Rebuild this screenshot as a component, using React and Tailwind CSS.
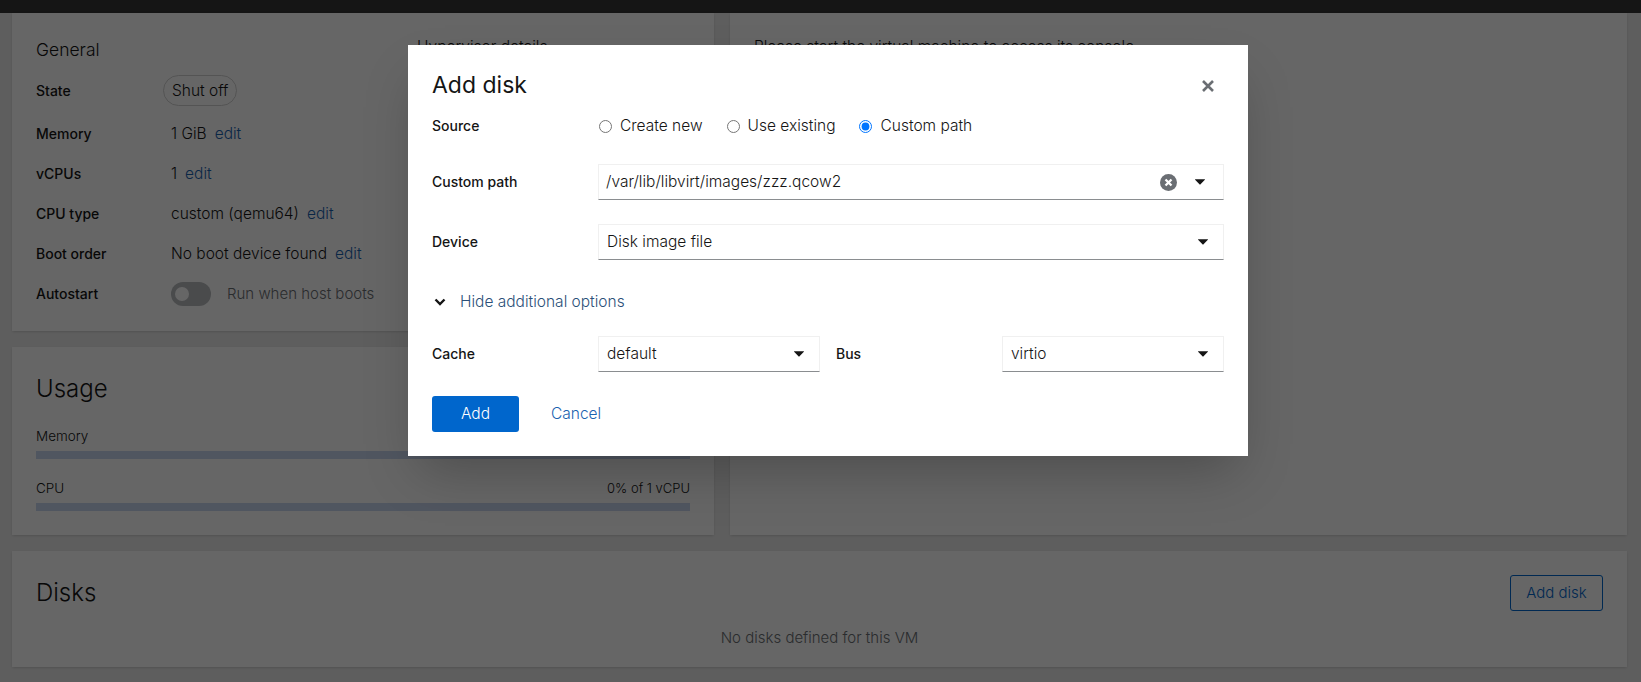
import React from "react";

function Caret() {
    return (
        <svg width="10" height="6" viewBox="0 0 10 6" className="shrink-0">
            <path d="M0.3 0.2h9.4c.3 0 .4.3.2.5L5.3 5.6c-.2.2-.4.2-.6 0L.1.7C-.1.5 0 .2.3.2z" fill="#151515" />
        </svg>
    );
}

function Select({ value }) {
    return (
        <div className="flex h-9 items-center justify-between border border-[#f0f0f0] border-b-[#8a8d90] pl-2 pr-[15px] text-[#151515]">
            <span>{value}</span>
            <Caret />
        </div>
    );
}

function Radio({ label, checked }) {
    return (
        <label className="flex items-center gap-2 text-[#151515]">
            <input type="radio" name="source" defaultChecked={checked} className="m-0 h-[13px] w-[13px]" />
            <span>{label}</span>
        </label>
    );
}

function InfoRow({ label, children }) {
    return (
        <>
            <span className="text-sm font-medium text-[#151515]">{label}</span>
            <div className="flex items-center gap-2 text-[#151515]">{children}</div>
        </>
    );
}

function Edit() {
    return <a className="text-[#1a62b0]">edit</a>;
}

function UsageBar({ label, right }) {
    return (
        <div>
            <div className="flex h-5 items-center justify-between text-[13.5px] text-[#151515]">
                <span>{label}</span>
                <span className="text-[13px]">{right}</span>
            </div>
            <div className="mt-[5px] h-2 bg-[#c9d8f0]" />
        </div>
    );
}

export default function App() {
    return (
        <div className="relative h-[682px] overflow-hidden bg-[#ececec] font-['Inter',sans-serif] text-[15.5px] font-[350] leading-6">
            <div className="h-[13px] bg-[#353535]" />

            <div className="grid grid-cols-[702px_897px] gap-4 px-3">
                <div className="grid h-[318px] grid-cols-[381px_1fr] bg-white px-6 pt-[25px] shadow-sm">
                    <div>
                        <h2 className="text-[17.5px] text-[#151515]">General</h2>
                        <div className="mt-[13px] grid grid-cols-[135px_1fr] items-center gap-y-4">
                            <InfoRow label="State">
                                <span className="-ml-2 flex h-[31px] items-center rounded-full border border-[#d2d2d2] px-2">Shut off</span>
                            </InfoRow>
                            <InfoRow label="Memory">1 GiB <Edit /></InfoRow>
                            <InfoRow label="vCPUs">1 <Edit /></InfoRow>
                            <InfoRow label="CPU type">custom (qemu64) <Edit /></InfoRow>
                            <InfoRow label="Boot order">No boot device found <Edit /></InfoRow>
                            <InfoRow label="Autostart">
                                <span className="flex h-6 w-10 items-center rounded-full bg-[#b8bbbe] pl-1">
                                    <span className="h-[14px] w-[14px] rounded-full bg-white" />
                                </span>
                                <span className="ml-2 text-[15px] text-[#6a6e73]">Run when host boots</span>
                            </InfoRow>
                        </div>
                    </div>
                    <div className="-mt-[3px] text-[#151515]">Hypervisor details</div>
                </div>

                <div className="row-span-2 bg-white px-6 pt-[22px] text-[#151515] shadow-sm">
                    Please start the virtual machine to access its console.
                </div>

                <div className="h-[188px] bg-white px-6 pt-6 shadow-sm">
                    <h2 className="text-2xl leading-9 text-[#151515]">Usage</h2>
                    <div className="mt-[19px] flex flex-col gap-[19px]">
                        <UsageBar label="Memory" right="" />
                        <UsageBar label="CPU" right="0% of 1 vCPU" />
                    </div>
                </div>

                <div className="col-span-2 h-[116px] bg-white px-6 pt-6 shadow-sm">
                    <div className="flex items-center justify-between">
                        <h2 className="text-2xl text-[#151515]">Disks</h2>
                        <button className="flex h-9 w-[93px] items-center justify-center rounded-[3px] border border-[#0066cc] text-[15px] text-[#0066cc]">Add disk</button>
                    </div>
                    <p className="mt-[15px] text-center text-[15px] text-[#6a6e73]">No disks defined for this VM</p>
                </div>
            </div>

            {/* modal backdrop */}
            <div className="absolute inset-0 bg-black/60">
                <div className="absolute left-[408px] top-[45px] flex h-[411px] w-[840px] flex-col bg-white p-6 shadow-2xl">
                    <div className="flex h-[30px] items-center justify-between">
                        <h1 className="mt-[2px] text-[23px] font-normal text-[#151515]">Add disk</h1>
                        <svg width="14" height="14" viewBox="0 0 14 14" className="mr-[9px] mt-1">
                            <path d="M2 2l10 10M12 2L2 12" stroke="#6a6e73" strokeWidth="2.6" />
                        </svg>
                    </div>

                    <div className="mt-[15px] grid h-5 grid-cols-[166px_1fr] items-center">
                        <span className="text-sm font-medium text-[#151515]">Source</span>
                        <div className="flex items-center gap-6 pl-px">
                            <Radio label="Create new" />
                            <Radio label="Use existing" />
                            <Radio label="Custom path" checked />
                        </div>
                    </div>

                    <div className="mt-[30px] grid grid-cols-[166px_1fr] items-center">
                        <span className="text-sm font-medium text-[#151515]">Custom path</span>
                        <div className="flex h-9 items-center border border-[#f0f0f0] border-b-[#8a8d90] pl-[7px] pr-[18px] text-[#151515]">
                            <span className="flex-1">/var/lib/libvirt/images/zzz.qcow2</span>
                            <svg width="17" height="17" viewBox="0 0 16 16" className="mr-[18px]">
                                <circle cx="8" cy="8" r="8" fill="#6a6e73" />
                                <path d="M5.2 5.2l5.6 5.6M10.8 5.2l-5.6 5.6" stroke="#fff" strokeWidth="2.2" />
                            </svg>
                            <Caret />
                        </div>
                    </div>

                    <div className="mt-6 grid grid-cols-[166px_1fr] items-center">
                        <span className="text-sm font-medium text-[#151515]">Device</span>
                        <Select value="Disk image file" />
                    </div>

                    <div className="mt-[30px] flex h-6 items-center">
                        <svg width="12" height="8" viewBox="0 0 12 8" className="ml-[2px]">
                            <path d="M1.5 1.5L6 6l4.5-4.5" fill="none" stroke="#151515" strokeWidth="2.4" />
                        </svg>
                        <span className="ml-[14px] text-[#2b5078]">Hide additional options</span>
                    </div>

                    <div className="mt-[22px] grid grid-cols-[166px_222px_182px_222px] items-center">
                        <span className="text-sm font-medium text-[#151515]">Cache</span>
                        <Select value="default" />
                        <span className="pl-4 text-sm font-medium text-[#151515]">Bus</span>
                        <Select value="virtio" />
                    </div>

                    <div className="mt-6 flex items-center">
                        <button className="h-9 w-[87px] rounded-[3px] bg-[#0066cc] text-white">Add</button>
                        <a className="ml-8 text-[#1a62b0]">Cancel</a>
                    </div>
                </div>
            </div>
        </div>
    );
}
